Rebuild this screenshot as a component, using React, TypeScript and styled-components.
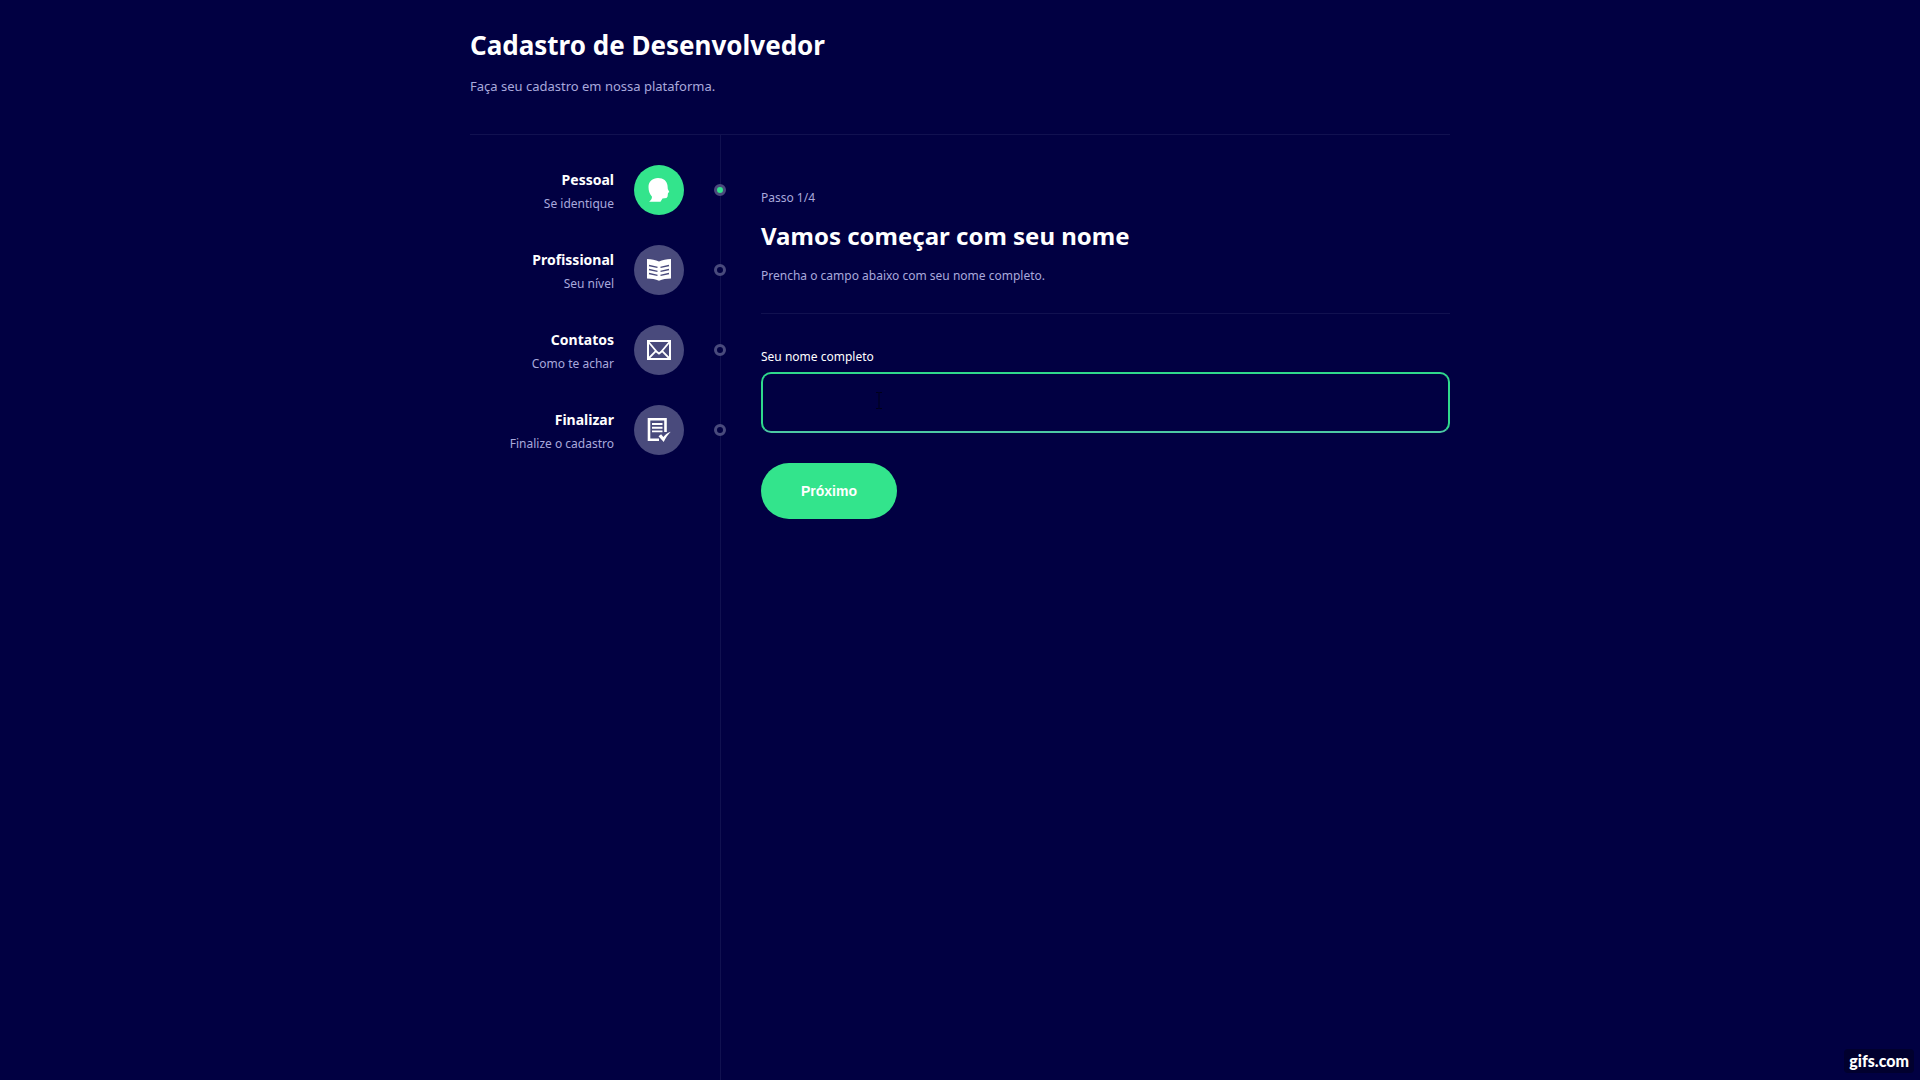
import React, { useState } from "react";
import styled, { createGlobalStyle } from "styled-components";

const GlobalStyle = createGlobalStyle`
  * { box-sizing: border-box; margin: 0; padding: 0; }
  body {
    background: #010042;
    color: #fff;
    font-family: "Segoe UI", "Noto Sans", "Open Sans", sans-serif;
  }
`;

const Page = styled.div`
  display: flex;
  flex-direction: column;
  width: 100%;
  max-width: 980px;
  min-height: 100vh;
  margin: 0 auto;
`;

const Header = styled.header`
  padding: 25px 0 38px;
  border-bottom: 1px solid #111150;
`;

const SiteTitle = styled.h1`
  font-size: 26px;
  line-height: 40px;
`;

const Muted = styled.p`
  color: #a9a9dc;
  font-size: 12px;
  line-height: 20px;
`;

const Tagline = styled(Muted)`
  margin-top: 11px;
  font-size: 13px;
`;

const Steps = styled.div`
  display: flex;
  flex: 1;
`;

const Sidebar = styled.nav`
  display: flex;
  flex-direction: column;
  gap: 30px;
  width: 251px;
  padding-top: 30px;
  border-right: 1px solid #111150;
`;

const StepLink = styled.a`
  display: flex;
  align-items: center;
  justify-content: flex-end;
  margin-right: -6px;
  color: inherit;
  text-decoration: none;
`;

const StepText = styled.div`
  margin-right: 20px;
  padding-top: 4px;
  text-align: right;
`;

const StepTitle = styled.div`
  margin-bottom: 4px;
  font-size: 14px;
  font-weight: bold;
  line-height: 20px;
`;

const StepIcon = styled.div<{ $active: boolean }>`
  display: flex;
  align-items: center;
  justify-content: center;
  width: 50px;
  height: 50px;
  margin-right: 30px;
  border-radius: 50%;
  background: ${(p) => (p.$active ? "#33e48c" : "#494a7c")};
`;

const StepDot = styled.div<{ $active: boolean }>`
  width: 12px;
  height: 12px;
  border: 3px solid #494a7c;
  border-radius: 50%;
  background: ${(p) => (p.$active ? "#33e48c" : "#010042")};
`;

const Content = styled.main`
  flex: 1;
  padding: 53px 0 40px 40px;
`;

const Heading = styled.h2`
  margin: 8px 0 10px;
  font-size: 24px;
  line-height: 40px;
`;

const Divider = styled.hr`
  height: 1px;
  margin: 27px 0 33px;
  border: 0;
  background: #111150;
`;

const Label = styled.label`
  display: block;
  font-size: 12px;
  line-height: 20px;
`;

const Field = styled.div`
  position: relative;
  margin: 5px 0 30px;
`;

const NameInput = styled.input`
  display: block;
  width: 100%;
  height: 61px;
  padding: 20px 10px;
  border: 2px solid #2fd98c;
  border-bottom-color: #4cc9a4;
  border-radius: 10px;
  outline: 0;
  background: #010042;
  color: #fff;
  font-size: 15px;
`;

const Pointer = styled.svg`
  position: absolute;
  top: 20px;
  left: 114px;
  pointer-events: none;
`;

const NextButton = styled.button`
  padding: 20px 40px;
  border: 0;
  border-radius: 30px;
  background: #33e48c;
  color: #fff;
  font-family: Arial, "Liberation Sans", sans-serif;
  font-size: 14px;
  font-weight: bold;
  line-height: 16px;
  cursor: pointer;
`;

const Badge = styled.a`
  position: fixed;
  right: 6px;
  bottom: 7px;
  padding: 0 5px;
  border-radius: 4px;
  background: #01002e;
  color: #fff;
  font-family: Lato, sans-serif;
  font-size: 16px;
  font-weight: 900;
  line-height: 24px;
  text-decoration: none;
`;

const ProfileIcon = () => (
  <svg width="24" height="26" viewBox="0 0 24 26" fill="#fff" aria-hidden="true">
    <path d="M1.500 10C1.500 4.500 5.500 1 11 1c5.500 0 9 3 9.500 7.500l.3 3.500 1.500 3-1.300 1-.4 3.500-1.100 1.500-4 .5L13.500 24.700H2.200c1.800-1.500 2.700-3 2.800-5C2.500 17 1.500 14 1.500 10z" />
  </svg>
);

const BookIcon = () => (
  <svg width="26" height="24" viewBox="0 0 26 24" aria-hidden="true">
    <path d="M1 1c4.500.2 8.500.8 12 2.400C16.500 1.800 20.500 1.200 25 1v19.500c-4.500 0-8.500.8-12 2.200-3.500-1.400-7.500-2.200-12-2.200z" fill="#fff" />
    <path d="M3 7.500l8.500 1.900M3 11.500l8.500 1.900M3 15.500l8.500 1.900M23 7.500l-8.500 1.900M23 11.500l-8.500 1.900M23 15.500l-8.500 1.900" stroke="#494a7c" strokeWidth="1.300" fill="none" />
  </svg>
);

const MailIcon = () => (
  <svg width="24" height="20" viewBox="0 0 24 20" fill="none" stroke="#fff" aria-hidden="true">
    <path d="M1 1h22v18H1z" strokeWidth="2" />
    <path d="M1.500 2l8.500 10 2 1.500 2-1.500L22.500 2M1.500 18.500L9 10.800M22.500 18.500L15 10.800" strokeWidth="1.800" />
  </svg>
);

const FormIcon = () => (
  <svg width="24" height="26" viewBox="0 0 24 26" fill="none" stroke="#fff" aria-hidden="true">
    <path d="M18.500 15V2.200H2v20.500h10" strokeWidth="2.600" />
    <path d="M5 7H15.500M5 10.700H15.500M5 14.400H15.500" strokeWidth="1.900" />
    <path d="M11.500 19.200l2.600-2 2.300 2.800c1.600-2.300 3.800-4 7.300-5.300-2.700 2.800-5 6-7 10.300z" fill="#fff" stroke="none" />
  </svg>
);

const steps = [
  { title: "Pessoal", description: "Se identique", path: "#pessoal", Icon: ProfileIcon },
  { title: "Profissional", description: "Seu nível", path: "#profissional", Icon: BookIcon },
  { title: "Contatos", description: "Como te achar", path: "#contatos", Icon: MailIcon },
  { title: "Finalizar", description: "Finalize o cadastro", path: "#finalizar", Icon: FormIcon },
];

export default function App() {
  const [name, setName] = useState("");
  const current = 0;

  return (
    <>
      <GlobalStyle />
      <Page>
        <Header>
          <SiteTitle>Cadastro de Desenvolvedor</SiteTitle>
          <Tagline>Faça seu cadastro em nossa plataforma.</Tagline>
        </Header>
        <Steps>
          <Sidebar>
            {steps.map(({ title, description, path, Icon }, i) => (
              <StepLink key={title} href={path}>
                <StepText>
                  <StepTitle>{title}</StepTitle>
                  <Muted>{description}</Muted>
                </StepText>
                <StepIcon $active={i === current}>
                  <Icon />
                </StepIcon>
                <StepDot $active={i === current} />
              </StepLink>
            ))}
          </Sidebar>
          <Content>
            <Muted>Passo 1/4</Muted>
            <Heading>Vamos começar com seu nome</Heading>
            <Muted>Prencha o campo abaixo com seu nome completo.</Muted>
            <Divider />
            <Label htmlFor="name">Seu nome completo</Label>
            <Field>
              <NameInput
                id="name"
                type="text"
                value={name}
                onChange={(e) => setName(e.target.value)}
              />
              <Pointer width="8" height="17" viewBox="0 0 8 17" fill="none" stroke="#000018" aria-hidden="true">
                <path d="M1 .5h2.500L4 1l.5-.5H7M4 1v15M1 16.500h2.500L4 16l.5.5H7" />
              </Pointer>
            </Field>
            <NextButton type="button">Próximo</NextButton>
          </Content>
        </Steps>
      </Page>
      <Badge href="#gifs">gifs.com</Badge>
    </>
  );
}
